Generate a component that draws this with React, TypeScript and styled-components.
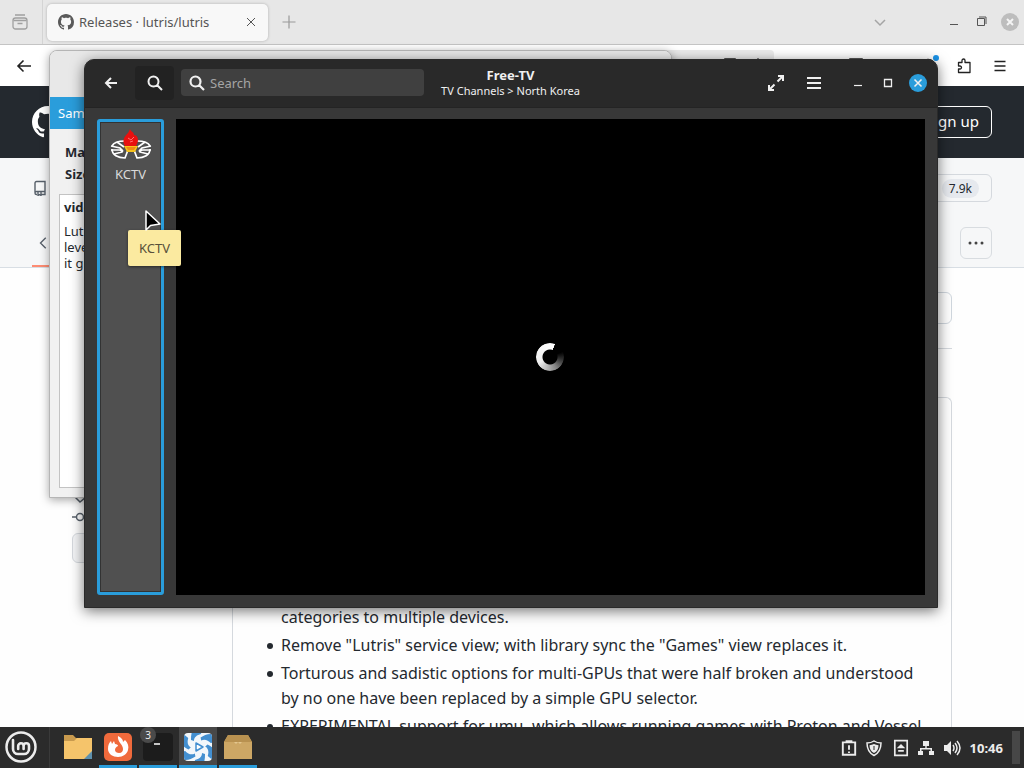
import React from 'react';
import styled, { createGlobalStyle, css } from 'styled-components';

const ui = '"Noto Sans", "Open Sans", sans-serif';

const Global = createGlobalStyle`
  * { box-sizing: border-box; }
  html, body { margin: 0; height: 100%; overflow: hidden; }
  body { font-family: ${ui}; font-size: 13px; color: #24292f; background: #fff; }
  button, input { font: inherit; color: inherit; margin: 0; padding: 0; border: 0; background: none; }
  h1, h2, p, ul { margin: 0; padding: 0; font-size: inherit; }
  svg { display: block; flex: none; }
`;

const Desktop = styled.div`
  position: relative;
  height: 100vh;
  display: flex;
  flex-direction: column;
  overflow: hidden;
`;

/* Browser */
const Browser = styled.main`
  flex: 1;
  min-height: 0;
  display: flex;
  flex-direction: column;
  overflow: hidden;
  background: #fefefe;
`;

const TabBar = styled.div`
  flex: none;
  height: 45px;
  display: flex;
  align-items: center;
  background: #e7e7e7;
  border-bottom: 1px solid #c4c4c4;
  color: #555;
`;

const IconButton = styled.button<{ $w?: number; $h?: number }>`
  position: relative;
  flex: none;
  width: ${p => p.$w ?? 40}px;
  height: ${p => p.$h ?? 40}px;
  display: flex;
  align-items: center;
  justify-content: center;
`;

const Tab = styled.div`
  height: 37px;
  width: 221px;
  margin-left: 4px;
  padding: 0 3px 0 11px;
  display: flex;
  align-items: center;
  gap: 5px;
  border-radius: 5px;
  background: #f8f8f8;
  box-shadow: 0 0 3px rgba(0, 0, 0, 0.25);
  span { flex: 1; white-space: nowrap; }
`;

const Divider = styled.i`
  width: 1px;
  height: 44px;
  margin-left: 2px;
  background: #d4d4d4;
`;

const Spacer = styled.div`
  flex: 1;
`;

const WindowControls = styled.div<{ $gap: number }>`
  display: flex;
  margin-left: ${p => p.$gap}px;
`;

const NavBar = styled.div`
  flex: none;
  height: 41px;
  display: flex;
  align-items: center;
  padding: 0 6px 0 4px;
  background: #fff;
  color: #222;
`;

const AddressBar = styled.div`
  flex: 1;
  height: 32px;
  margin: 0 64px 0 140px;
  padding-right: 8px;
  display: flex;
  align-items: center;
  justify-content: flex-end;
  gap: 12px;
  border-radius: 4px;
  background: #ececec;
`;

const Dot = styled.i`
  position: absolute;
  right: 7px;
  top: 9px;
  width: 6px;
  height: 6px;
  border-radius: 3px;
  background: #1b93e8;
`;

const SiteHeader = styled.header`
  flex: none;
  height: 72px;
  padding: 0 32px;
  display: flex;
  align-items: center;
  justify-content: space-between;
  background: #24292f;
  color: #fff;
`;

const SignUp = styled.button`
  height: 32px;
  padding: 0 12px 2px;
  border: 1px solid #fff;
  border-radius: 6px;
  font-size: 15px;
`;

const RepoHeader = styled.section`
  flex: none;
  height: 110px;
  padding: 0 32px;
  display: flex;
  flex-direction: column;
  background: #f6f7f8;
  border-bottom: 1px solid #d8dee4;
`;

const RepoRow = styled.div`
  height: 60px;
  display: flex;
  align-items: center;
  justify-content: space-between;
`;

const StarButton = styled.button`
  height: 28px;
  width: 110px;
  padding-right: 12px;
  display: flex;
  align-items: center;
  justify-content: flex-end;
  border: 1px solid #d5d9de;
  border-radius: 6px;
  font-size: 12px;
  span { padding: 1px 7px; border-radius: 10px; background: #e6e9ee; }
`;

const RepoNav = styled.nav`
  height: 49px;
  display: flex;
  align-items: center;
  justify-content: space-between;
`;

const NavItem = styled.div`
  align-self: stretch;
  width: 90px;
  padding: 3px 0 0 5px;
  display: flex;
  align-items: center;
  border-bottom: 2px solid #fd8c73;
`;

const MoreButton = styled.button`
  width: 32px;
  height: 32px;
  display: flex;
  align-items: center;
  justify-content: center;
  border: 1px solid #d8dce0;
  border-radius: 6px;
`;

const Page = styled.div`
  flex: 1;
  min-height: 0;
  display: flex;
  padding: 0 72px;
`;

const Meta = styled.aside`
  flex: none;
  width: 160px;
  padding-top: 223px;
  display: flex;
  flex-direction: column;
  align-items: flex-start;
  gap: 2px;
  color: #57606a;
`;

const CompareButton = styled.button`
  width: 100px;
  height: 30px;
  margin-top: 6px;
  border: 1px solid #d5d9de;
  border-radius: 6px;
  background: #f3f4f6;
`;

const Article = styled.section`
  flex: 1;
  min-width: 0;
  display: flex;
  flex-direction: column;
`;

const SearchLine = styled.div`
  flex: none;
  height: 81px;
  padding-top: 24px;
  border-bottom: 1px solid #d5d9de;
  input { display: block; width: 100%; height: 32px; border: 1px solid #d0d7de; border-radius: 6px; }
`;

const Release = styled.div`
  flex: 1;
  min-height: 0;
  margin-top: 48px;
  padding: 207px 24px 0;
  border: 1px solid #d5d9de;
  border-bottom: 0;
  border-radius: 6px 6px 0 0;
  overflow: hidden;
  font-size: 16px;
  line-height: 25px;
`;

const Notes = styled.ul`
  display: flex;
  flex-direction: column;
  gap: 3px;
  list-style: none;
`;

const Note = styled.li<{ $continued?: boolean }>`
  display: flex;
  &::before {
    content: '';
    flex: none;
    width: 6px;
    height: 6px;
    margin: 10px 8px 0 10px;
    border-radius: 3px;
    background: ${p => (p.$continued ? 'transparent' : 'currentColor')};
  }
`;

/* Installer dialog behind the media player */
const Dialog = styled.section`
  position: absolute;
  left: 49px;
  top: 50px;
  width: 623px;
  height: 448px;
  display: flex;
  flex-direction: column;
  background: #f1f1f1;
  border: 1px solid #b5b5b5;
  border-radius: 8px 8px 0 0;
  box-shadow: 0 2px 10px rgba(0, 0, 0, 0.35);
  overflow: hidden;
`;

const DialogTitle = styled.header`
  height: 46px;
  flex: none;
  background: #e8e8e8;
`;

const DialogBanner = styled.div`
  flex: none;
  height: 32px;
  padding-left: 8px;
  line-height: 32px;
  background: #2a9ddb;
  color: #fff;
`;

const DialogFacts = styled.div`
  flex: none;
  height: 65px;
  padding: 12px 15px;
  font-weight: 700;
  line-height: 22px;
`;

const DialogText = styled.div`
  flex: 1;
  margin: 0 9px 9px;
  padding: 4px 4px;
  border: 1px solid #c3c3c3;
  background: #fff;
  line-height: 16px;
  h2 { margin-bottom: 8px; }
`;

/* Media player */
const Player = styled.section`
  position: absolute;
  left: 84px;
  right: 86px;
  top: 59px;
  bottom: 160px;
  display: flex;
  flex-direction: column;
  background: #383838;
  border: 1px solid #2a2a2a;
  border-radius: 10px 10px 0 0;
  box-shadow: 0 3px 14px rgba(0, 0, 0, 0.55);
  color: #dadada;
`;

const PlayerBar = styled.header`
  flex: none;
  height: 48px;
  padding: 0 3px 2px 8px;
  display: grid;
  grid-template-columns: 1fr auto 1fr;
  align-items: center;
  background: #292929;
  border-bottom: 1px solid #242424;
  border-radius: 9px 9px 0 0;
  color: #f0f0f0;
`;

const Group = styled.div<{ $end?: boolean }>`
  display: flex;
  align-items: center;
  ${p => p.$end && css`justify-content: flex-end;`}
`;

const SearchToggle = styled(IconButton)`
  margin: 0 7px 0 6px;
  border-radius: 4px;
  background: #222;
`;

const SearchField = styled.label`
  width: 243px;
  height: 27px;
  padding: 0 8px;
  display: flex;
  align-items: center;
  gap: 5px;
  border-radius: 4px;
  background: #404040;
  input { flex: 1; min-width: 0; outline: 0; }
  input::placeholder { color: #a5a5a5; opacity: 1; }
`;

const Title = styled.div`
  padding-right: 6px;
  text-align: center;
  line-height: 15px;
  h1 { font-size: 13px; font-weight: 700; }
  p { font-size: 11px; }
`;

const CloseDisc = styled.span`
  width: 18px;
  height: 18px;
  display: flex;
  align-items: center;
  justify-content: center;
  border-radius: 9px;
  background: #2a9ddb;
`;

const PlayerBody = styled.div`
  flex: 1;
  min-height: 0;
  display: flex;
  gap: 12px;
  padding: 11px 12px 12px;
`;

const Channel = styled.button`
  width: 67px;
  padding-top: 6px;
  display: flex;
  flex-direction: column;
  align-items: center;
  gap: 3px;
  border: 3px solid #2a9ddb;
  border-radius: 3px;
  background: #505050;
  box-shadow: inset 0 0 0 1px #333;
`;

const Video = styled.div`
  flex: 1;
  padding-right: 2px;
  display: flex;
  align-items: center;
  justify-content: center;
  background: #000;
`;

const Spinner = styled.div`
  width: 28px;
  height: 28px;
  border-radius: 50%;
  background: conic-gradient(from 22deg, #000 0deg, #000 45deg, #333 80deg, #888 130deg, #eee 220deg, #fff 358deg, #000 360deg);
  mask: radial-gradient(circle, transparent 7px, #000 8px);
`;

const Tooltip = styled.div`
  position: absolute;
  left: 128px;
  top: 230px;
  width: 53px;
  height: 36px;
  border-radius: 2px;
  background: #fbeaa0;
  color: #57503a;
  line-height: 36px;
  text-align: center;
  box-shadow: 0 1px 3px rgba(0, 0, 0, 0.5);
`;

const Pointer = styled.svg`
  position: absolute;
  left: 144px;
  top: 209px;
`;

/* Taskbar */
const Taskbar = styled.footer`
  position: relative;
  flex: none;
  height: 41px;
  display: flex;
  align-items: stretch;
  background: #2b2b2b;
  color: #ececec;
`;

const MenuButton = styled(IconButton)`
  width: 42px;
`;

const PanelLine = styled.i`
  width: 1px;
  margin: 0 7px;
  background: #3a3a3a;
`;

const Launcher = styled.button<{ $running?: boolean; $active?: boolean }>`
  position: relative;
  width: 38px;
  margin-left: 2px;
  padding-top: 1px;
  display: flex;
  align-items: center;
  justify-content: center;
  background: ${p => (p.$active ? '#484848' : 'transparent')};
  border-bottom: 3px solid ${p => (p.$running ? '#2a9ddb' : 'transparent')};
`;

const Badge = styled.span`
  position: absolute;
  left: 1px;
  top: 0;
  width: 16px;
  height: 16px;
  border-radius: 8px;
  background: #4a4a4a;
  font-size: 10px;
  line-height: 16px;
  text-align: center;
`;

const Tray = styled.div`
  display: flex;
  align-items: center;
  gap: 8px;
  padding-right: 8px;
`;

const Clock = styled.time`
  display: flex;
  align-items: center;
  padding-right: 8px;
  font-weight: 700;
`;

const ShowDesktop = styled.button`
  width: 8px;
  margin: 4px 4px 4px 1px;
  background: #474747;
`;

const octocat =
  'M8 0C3.58 0 0 3.58 0 8c0 3.54 2.29 6.53 5.47 7.59.4.07.55-.17.55-.38 0-.19-.01-.82-.01-1.49-2.01.37-2.53-.49-2.69-.94-.09-.23-.48-.94-.82-1.13-.28-.15-.68-.52-.01-.53.63-.01 1.08.58 1.23.82.72 1.21 1.87.87 2.33.66.07-.52.28-.87.51-1.07-1.78-.2-3.64-.89-3.64-3.95 0-.87.31-1.59.82-2.15-.08-.2-.36-1.02.08-2.12 0 0 .67-.21 2.2.82.64-.18 1.32-.27 2-.27s1.36.09 2 .27c1.53-1.04 2.2-.82 2.2-.82.44 1.1.16 1.92.08 2.12.51.56.82 1.27.82 2.15 0 3.07-1.87 3.75-3.65 3.95.29.25.54.73.54 1.48 0 1.07-.01 1.93-.01 2.2 0 .21.15.46.55.38A8.01 8.01 0 0 0 16 8c0-4.42-3.58-8-8-8z';

const GitHub = ({ size, color }: { size: number; color: string }) => (
  <svg width={size} height={size} viewBox="0 0 16 16" fill={color}><path d={octocat} /></svg>
);

type LineProps = { size?: number; w?: number; color?: string; d: string; cap?: 'round' | 'butt' };

const Line = ({ size = 16, w = 2, color = 'currentColor', d, cap = 'butt' }: LineProps) => (
  <svg width={size} height={size} viewBox="0 0 16 16" fill="none" stroke={color} strokeWidth={w} strokeLinecap={cap} strokeLinejoin={cap === 'round' ? 'round' : 'miter'}>
    <path d={d} />
  </svg>
);

const magnifier = 'M6.5 1.5a5 5 0 1 1 0 10 5 5 0 0 1 0-10ZM10 10l5 5';
const cross = 'M4 4l8 8M12 4l-8 8';

const KctvLogo = () => (
  <svg width="42" height="34" viewBox="0 0 42 34" fill="none">
    <g stroke="#fff" strokeWidth="1.700">
      <path d="M15 13C9 13 4 14 2 18M2 21c0 6 6 9 13 9l3-8M27 13c6 0 11 1 13 5M40 21c0 6-6 9-13 9l-3-8" />
      <path d="M1 18l9 2 3 3M1 22h9l3 2M4 26l8-2M7 14l7 5M41 18l-9 2-3 3M41 22h-9l-3 2M38 26l-8-2M35 14l-7 5" />
    </g>
    <path d="M14 18h14l-3 6h-8z" fill="#f7c21c" />
    <path d="M16 19h10l-2 3h-6z" fill="#ee8b13" />
    <path d="M15 18c-3-5-1-9 2-12 2-2 2-3 3-5 1 3 4 3 4 6 3 0 4 3 4 5s-1 4-2 6z" fill="#e8100f" />
    <path d="M18 10l3 2 3-3M20 14l3-1" stroke="#ff7070" />
  </svg>
);

const blades = [0, 60, 120, 180, 240, 300];

export default function App() {
  return (
    <Desktop>
      <Global />
      <Browser>
        <TabBar>
          <IconButton aria-label="Recent browsing">
            <svg width="16" height="16" viewBox="0 0 16 16" fill="none" stroke="#a0a0a0" strokeWidth="1.3">
              <path d="M3 1h10M1.500 6.500h13M5.500 9.500h5" /><rect x="1" y="4" width="14" height="11" rx="2.500" />
            </svg>
          </IconButton>
          <Divider />
          <Tab>
            <GitHub size={16} color="#5a5a5a" />
            <span>Releases · lutris/lutris</span>
            <IconButton $w={28} aria-label="Close tab"><Line d={cross} w={1} /></IconButton>
          </Tab>
          <IconButton $w={42} aria-label="New tab"><Line d="M8 1.500v13M1.500 8h13" w={1.2} color="#999" /></IconButton>
          <Spacer />
          <IconButton aria-label="List tabs"><Line d="M3 6l5 5 5-5" w={1.5} color="#a5a5a5" /></IconButton>
          <WindowControls $gap={42}>
            <IconButton $w={24} aria-label="Minimize"><Line d="M4 10.500h8" w={1} /></IconButton>
            <IconButton $w={30} aria-label="Restore"><Line d="M4.500 4.500h7v7h-7zM6 3h7v7" w={1} /></IconButton>
            <IconButton $w={28} aria-label="Close window">
              <svg width="18" height="18" viewBox="0 0 18 18"><circle cx="9" cy="9" r="9" fill="#bdbdbd" /><path d="M6 6l6 6M12 6l-6 6" stroke="#f4f4f4" strokeWidth="2" /></svg>
            </IconButton>
          </WindowControls>
        </TabBar>
        <NavBar>
          <IconButton aria-label="Back"><Line d="M15 8H2M7.500 2.500L2 8l5.500 5.500" w={1.6} /></IconButton>
          <AddressBar>
            <Line d="M3 1h10v14H3z" w={1.5} />
            <Line d="M8 1l2 5h5l-4 3 2 6-5-4-5 4 2-6-4-3h5z" w={1.3} />
          </AddressBar>
          <IconButton $w={36} aria-label="Pocket"><Line d="M2 1h12v6a6 6 0 0 1-12 0z" w={1.5} /></IconButton>
          <IconButton $w={36} aria-label="Downloads"><Line d="M8 1v9M4 7l4 4 4-4M2 14h12" w={1.5} /></IconButton>
          <IconButton $w={36} aria-label="Account"><Line d="M8 1.500a6.500 6.500 0 1 1 0 13 6.500 6.500 0 0 1 0-13z" w={1.5} /><Dot /></IconButton>
          <IconButton $w={36} aria-label="Extensions"><Line d="M2.500 4.500H6V2.500a1.500 1.500 0 0 1 3 0v2h5v10H2.500V11H4a1.500 1.500 0 0 0 0-3H2.500z" w={1.3} cap="round" /></IconButton>
          <IconButton $w={36} aria-label="Application menu"><Line d="M2.500 3.500h11M2.500 8h11M2.500 12.500h11" w={1.4} /></IconButton>
        </NavBar>
        <SiteHeader>
          <GitHub size={32} color="#fff" />
          <SignUp>Sign up</SignUp>
        </SiteHeader>
        <RepoHeader>
          <RepoRow>
            <Line d="M3 12.500V3a1.500 1.500 0 0 1 1.500-1.500H13v10H4.500a1.500 1.500 0 0 0 0 3H5M13 11v3.500H9M6 12v3.500l1.500-1L9 15.500V12" w={1.4} color="#57606a" />
            <StarButton><span>7.9k</span></StarButton>
          </RepoRow>
          <RepoNav>
            <NavItem><Line size={14} d="M10 2L4 8l6 6" w={1.6} color="#57606a" /></NavItem>
            <MoreButton aria-label="More"><svg width="16" height="16" viewBox="0 0 16 16" fill="#444"><circle cx="2" cy="8" r="1.500" /><circle cx="8" cy="8" r="1.500" /><circle cx="14" cy="8" r="1.500" /></svg></MoreButton>
          </RepoNav>
        </RepoHeader>
        <Page>
          <Meta>
            <Line d="M3 6l5 5 6-5" w={1.5} />
            <Line d="M0 8h4M12 8h4M8 4.500a3.500 3.500 0 1 1 0 7 3.500 3.500 0 0 1 0-7z" w={1.5} />
            <CompareButton aria-label="Compare" />
          </Meta>
          <Article>
            <SearchLine><input aria-label="Find a release" /></SearchLine>
            <Release>
              <Notes>
                <Note $continued>categories to multiple devices.</Note>
                <Note>Remove &quot;Lutris&quot; service view; with library sync the &quot;Games&quot; view replaces it.</Note>
                <Note>Torturous and sadistic options for multi-GPUs that were half broken and understood by no one have been replaced by a simple GPU selector.</Note>
                <Note>EXPERIMENTAL support for umu, which allows running games with Proton and Vessel</Note>
              </Notes>
            </Release>
          </Article>
        </Page>
      </Browser>

      <Dialog>
        <DialogTitle />
        <DialogBanner>Sam</DialogBanner>
        <DialogFacts><div>Ma</div><div>Size</div></DialogFacts>
        <DialogText><h2>vide</h2><p>Lutr</p><p>leve</p><p>it gi</p></DialogText>
      </Dialog>

      <Player>
        <PlayerBar>
          <Group>
            <IconButton $w={36} aria-label="Go back"><Line d="M14 8H3M8 3L3 8l5 5" w={2} /></IconButton>
            <SearchToggle $w={39} $h={34} aria-label="Toggle search"><Line d={magnifier} w={2} /></SearchToggle>
            <SearchField>
              <Line d={magnifier} w={2.2} />
              <input aria-label="Search" placeholder="Search" />
            </SearchField>
          </Group>
          <Title><h1>Free-TV</h1><p>TV Channels &gt; North Korea</p></Title>
          <Group $end>
            <IconButton $w={38} aria-label="Fullscreen"><Line d="M9.500 6.500l5-5M10 1h5v5M6.500 9.500l-5 5M6 15H1v-5" w={2} /></IconButton>
            <IconButton $w={38} aria-label="Menu"><Line d="M1 3h14M1 8h14M1 13h14" w={2} /></IconButton>
            <WindowControls $gap={9}>
              <IconButton $w={32} aria-label="Minimize"><Line d="M4 10.500h8" w={1.2} /></IconButton>
              <IconButton $w={28} aria-label="Maximize"><Line d="M4.500 4.500h7v7h-7z" w={1.3} /></IconButton>
              <IconButton $w={32} aria-label="Close"><CloseDisc><Line size={14} d={cross} w={1.8} /></CloseDisc></IconButton>
            </WindowControls>
          </Group>
        </PlayerBar>
        <PlayerBody>
          <Channel><KctvLogo />KCTV</Channel>
          <Video><Spinner role="progressbar" aria-label="Loading" /></Video>
        </PlayerBody>
      </Player>

      <Tooltip role="tooltip">KCTV</Tooltip>
      <Pointer width="18" height="24" viewBox="0 0 18 24"><path d="M2 2v19l4.500-4.500L16 15z" fill="#000" stroke="#fff" strokeWidth="1.500" strokeLinejoin="round" /></Pointer>

      <Taskbar>
        <MenuButton aria-label="Start menu">
          <svg width="32" height="32" viewBox="0 0 32 32" fill="none" stroke="#ececec" strokeLinecap="round">
            <circle cx="16" cy="16" r="14.500" strokeWidth="2.500" />
            <path d="M8 9v9a5 5 0 0 0 5 5h6a5 5 0 0 0 5-5v-3a2.700 2.700 0 0 0-5.400 0v3M18.600 15a2.700 2.700 0 0 0-5.400 0v3" strokeWidth="2.600" />
          </svg>
        </MenuButton>
        <PanelLine />
        <Launcher aria-label="Files">
          <svg width="28" height="26" viewBox="0 0 28 26"><path d="M0 1h9l3 3h16v21H0z" fill="#c89a4e" /><path d="M0 7h10l3-3h15v21H0z" fill="#f5c46b" /><path d="M20 25l8-8v8z" fill="#5e90ad" /></svg>
        </Launcher>
        <Launcher $running aria-label="Firefox">
          <svg width="28" height="28" viewBox="0 0 28 28">
            <rect width="28" height="28" rx="5" fill="#f06a3c" />
            <path d="M14 3c4 2 5 4 5 6l2-2c3 3 4 6 3 10-1 4-5 7-10 7S4 21 4 16c0-4 1-6 3-8l1 3 2-3 1 3c2 0 3 1 3 2-2 1-3 2-3 4s2 3 4 3c3 0 4-2 4-4 0-5-6-7-5-13z" fill="#fff" />
          </svg>
        </Launcher>
        <Launcher $running aria-label="Terminal">
          <svg width="30" height="28" viewBox="0 0 30 28"><rect width="30" height="28" rx="4" fill="#1c1c1c" /><path d="M11 11h6" stroke="#fff" strokeWidth="1.500" /></svg>
          <Badge>3</Badge>
        </Launcher>
        <Launcher $running $active aria-label="Hypnotix">
          <svg width="28" height="28" viewBox="0 0 28 28">
            <defs><clipPath id="tile"><rect width="28" height="28" rx="4" /></clipPath></defs>
            <g clipPath="url(#tile)">
              <rect width="28" height="28" fill="#f2f7fb" />
              {blades.map(a => <path key={a} d="M10 8c0-4 3-6 7-7l1-6h-8c-3 4-3 8-3 12z" fill="#438fd0" transform={`rotate(${a} 14 14)`} />)}
              <path d="M12 10l7 4-7 4z" fill="#fff" stroke="#438fd0" strokeWidth="1.500" strokeLinejoin="round" />
            </g>
          </svg>
        </Launcher>
        <Launcher $running aria-label="Package installer">
          <svg width="28" height="26" viewBox="0 0 28 26"><path d="M4 1h20l4 7v17H0V8z" fill="#cda765" /><path d="M4 1h20l4 7H0z" fill="#b89150" /><path d="M10 8l2 2 2-2 2 2 2-2z" fill="#e3c68e" /></svg>
        </Launcher>
        <Spacer />
        <Tray>
          <Line size={18} d="M2.500 3h11v11h-11zM5 2h6M8 5.500v4M8 11v1.500" w={1.7} />
          <svg width="18" height="18" viewBox="0 0 18 18" fill="none" stroke="currentColor">
            <path d="M8 2q3 2 7 2c0 6-2 10-7 12.500C3 14 1 10 1 4q4 0 7-2z" strokeWidth="1.500" />
            <path d="M8 5q2 1 4.500 1.300C12.500 10 11 12.500 8 14 5 12.500 3.500 10 3.500 6.300Q6 6 8 5z" fill="currentColor" stroke="none" />
            <path d="M8 7v4" stroke="#2b2b2b" />
          </svg>
          <Line size={18} d="M2.500 1.500h11v13h-11zM5.500 10.500h5M6 7.500h4l-2-2z" w={1.5} />
          <svg width="18" height="18" viewBox="0 0 18 18" fill="currentColor"><path d="M5 2h6v5H8.700v2H14v3h2v4h-5v-4h1.500v-1.500h-9V12H5v4H0v-4h2V9h5.300V7H5z" /></svg>
          <svg width="18" height="18" viewBox="0 0 18 18" fill="none" stroke="currentColor" strokeWidth="1.500"><path d="M0 6h3l4-4v14l-4-4H0z" fill="currentColor" stroke="none" /><path d="M9 6q2 3 0 6M11 4q4 5 0 10M13 2q6 7 0 14" /></svg>
        </Tray>
        <Clock>10:46</Clock>
        <ShowDesktop aria-label="Show desktop" />
      </Taskbar>
    </Desktop>
  );
}
